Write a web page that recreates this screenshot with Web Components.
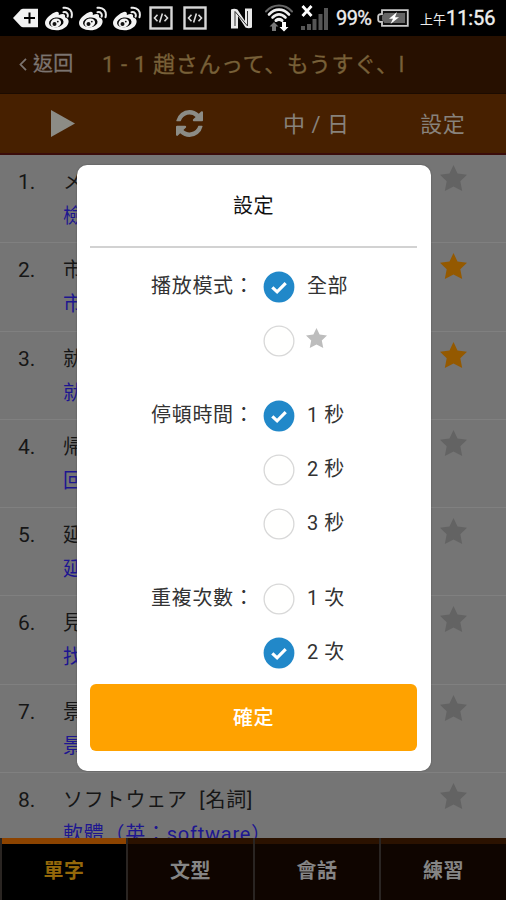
<!DOCTYPE html>
<html lang="zh-Hant"><head><meta charset="utf-8"><title>設定</title>
<style>
html,body{margin:0;height:900px;overflow:hidden;background:#757575;font-family:Roboto,"Noto Sans CJK TC",sans-serif}
</style></head><body>
<vocab-app></vocab-app>
<script>
const define = (name, html) => customElements.define(name, class extends HTMLElement {
  connectedCallback() {
    if (this.shadowRoot) return;
    const t = document.createElement('template');
    t.innerHTML = typeof html === 'function' ? html(this) : html;
    this.attachShadow({mode: 'open'}).append(t.content.cloneNode(true));
  }
});

define('star-icon', `<style>:host{display:block;width:27px;height:26px;color:#636363;white-space:normal}svg{display:block;width:100%;height:100%}</style>
<svg viewBox="0 0 27 26" preserveAspectRatio="none"><path fill="currentColor" d="M13.5 0 17.5 8.6 27 9.7 20.3 16.2 22.2 26 13.5 21.4 4.8 26 6.7 16.2 0 9.700 9.500 8.600Z"/></svg>`);

const weibo = `<svg style="margin-left:VARpx" width="28" height="25" viewBox="0 0 28 25">
<path fill="#f4f4f4" d="M9.500 6.500C12 5 14.500 5.500 13.800 9c4-1.700 7-1.300 6.200 2.200 3 .8 4.300 3.300 3.300 6C22 21.500 17 24.200 11.500 24.200 5 24.200 0 21.500 0 17 0 13 5 8.500 9.500 6.500Z"/>
<ellipse cx="11.300" cy="16.400" rx="7.300" ry="4.900" fill="#050505" transform="rotate(-8 11.3 16.6)"/>
<ellipse cx="10.800" cy="17" rx="5.400" ry="4.400" fill="#f4f4f4" transform="rotate(-20 10.8 17)"/>
<circle cx="9.500" cy="18" r="2" fill="#111"/><circle cx="12.800" cy="15.600" r=".9" fill="#111"/>
<path d="M18.500 6.200c3-.6 5 1.500 4.100 4.400M18.500 1.800c5.600-1 9.600 3.600 8 9.400" stroke="#eee" stroke-width="2" fill="none" stroke-linecap="round"/></svg>`;
const code = m => `<svg style="margin-left:${m}px" width="24" height="24" viewBox="0 0 24 24"><rect x="1.500" y="1.500" width="21" height="21" fill="#080808" stroke="#d8d8d8" stroke-width="2.400"/><path d="M8.500 8.800 5.500 12l3 3.200M15.500 8.800l3 3.200-3 3.200M13.400 7.500l-2.800 9" fill="none" stroke="#ddd" stroke-width="1.600"/></svg>`;

define('status-bar', `<style>:host{display:flex;align-items:center;height:36px;background:#000;color:#eee;font-size:20px;line-height:36px;white-space:nowrap}svg{flex:none;display:block}
.ap{font-size:13px;margin-left:11px;width:26px;padding-top:3px;box-sizing:border-box}.pc{margin-left:7px;width:38px;letter-spacing:-.6px;-webkit-text-stroke:.3px #eee}.tm{letter-spacing:-.1px;-webkit-text-stroke:.4px #eee}</style>
<svg style="margin-left:13px" width="25" height="20" viewBox="0 0 25 20"><path fill="#f2f2f2" d="M0 10 8 1.500Q8.800.800 10 .800H25V19.200H10Q8.800 19.200 8 18.500Z"/><path d="M16.500 4.500v11M11 10h11" stroke="#000" stroke-width="2"/></svg>
${weibo.replace('VAR','7')}${weibo.replace('VAR','6')}${weibo.replace('VAR','5.5')}${code(8.500)}${code(10)}
<svg style="margin-left:24px" width="21" height="21" viewBox="0 0 21 21"><path fill="#e8e8e8" d="M0 20.500V1.500C2 .500 4.500.500 6.500 1.500L14 13V.500H21V19.500C19 20.500 16.500 20.500 14.500 19.500L7 8V20.500Z"/><path d="M4 18V3.500L16.500 18V3" stroke="#333" stroke-width="1" fill="none"/></svg>
<svg style="margin-left:12px" width="30" height="28" viewBox="0 0 30 28"><g fill="none" stroke-linecap="round"><path d="M2 7.500C9-.500 21-.500 28 7.500" stroke="#666" stroke-width="2"/><path d="M5 10.500C11 4 19 4 25 10.500M8.500 13.500c4-4.200 9-4.200 13 0" stroke="#eee" stroke-width="2.600"/><path d="M12 16.500c2-1.500 4-1.500 6 0" stroke="#eee" stroke-width="3"/></g><path fill="#777" d="m10 18-4.500 4.500H8V27h4v-4.500h2.500Z"/><path fill="#fff" d="m20 27.500 4.500-4.500H22v-5h-4v5h-2.500Z"/></svg>
<svg style="margin-left:7px" width="28" height="26" viewBox="0 0 28 26"><path fill="#555" d="M0 21h4v4H0ZM6 19h4v6H6ZM11.500 14h4v11h-4ZM17.500 9h4v16h-4ZM23 3h4v22h-4Z"/><path d="m1.500 1 9 10M10.500 1l-9 10" stroke="#fff" stroke-width="2.800"/></svg>
<span class="pc">99%</span>
<svg style="margin-left:3px" width="32" height="18" viewBox="0 0 32 18"><path d="M5 1.200H30.800V16.800H5V13Q1.200 13 1.200 11V7Q1.200 5 5 5Z" fill="#111" stroke="#ccc" stroke-width="1.800"/><path fill="#666" d="M7.500 4H28v10H7.500L5 11V7Z"/><path fill="#fff" d="m20 3-8 6.800h4L13.500 15 22 8.200h-4Z"/></svg>
<span class="ap">上午</span><span class="tm">11:56</span>`);

define('title-bar', `<style>:host{display:flex;align-items:center;height:58px;box-sizing:border-box;background:#271000;color:#7c7470;font-size:20px;line-height:57px;white-space:nowrap;border-bottom:1px solid #1c0b00}
svg{margin-left:19px;width:8px;height:13px}.b{margin-left:6px;width:69px;letter-spacing:.3px;-webkit-text-stroke:.3px #7c7470}.t{width:304px;overflow:hidden;color:#786038;font-size:22px;letter-spacing:.65px;line-height:60px;font-family:Roboto,"Noto Sans CJK JP",sans-serif;-webkit-text-stroke:.3px #786038}</style>
<svg viewBox="0 0 8 13"><path d="M7 .800 1.500 6.500 7 12.200" fill="none" stroke="#7c7470" stroke-width="1.800"/></svg><span class="b">返回</span><span class="t" lang="ja">1 - 1 趙さんって、もうすぐ、l</span>`);

define('tool-bar', `<style>:host{display:grid;grid-template-columns:repeat(4,1fr);align-items:center;height:61px;box-sizing:border-box;background:#472000;border-bottom:2px solid #3a0c0a;color:#87827c;font-size:22px;text-align:center}
svg{display:block;margin:-3px auto 0;fill:#8c8c86}span{line-height:61px;letter-spacing:.5px}</style>
<svg width="24" height="27" viewBox="0 0 24 27"><path d="M0 0 24 13.500 0 27Z"/></svg>
<svg width="27" height="27" viewBox="0 0 1536 1536"><path d="M1511 928q0 5-1 7-64 268-268 434.500t-478 166.500q-146 0-282.500-55t-243.500-157l-129 129q-19 19-45 19t-45-19-19-45v-448q0-26 19-45t45-19h448q26 0 45 19t19 45-19 45l-137 137q71 66 161 102t187 36q134 0 250-65t186-179q11-17 53-117 8-23 30-23h192q13 0 22.500 9.500t9.500 22.500zm25-800v448q0 26-19 45t-45 19h-448q-26 0-45-19t-19-45 19-45l138-138q-148-137-349-137-134 0-250 65t-186 179q-11 17-53 117-8 23-30 23h-199q-13 0-22.500-9.500t-9.500-22.500v-7q65-268 270-434.500t480-166.500q146 0 284 55.500t245 156.500l130-129q19-19 45-19t45 19 19 45z"/></svg>
<span>中 / 日</span><span>設定</span>`);

define('word-row', el => `<style>:host{display:grid;grid-template-columns:45px 1fr 27px;height:88.300px;box-sizing:border-box;padding:10px 39px 0 18px;border-bottom:1.500px solid #808080;color:#161616;font-size:21px;white-space:nowrap}
.n{line-height:34px}.w{font-size:20px;line-height:35px;letter-spacing:.8px}.m{font-size:20px;line-height:32px;color:#1d1690;letter-spacing:.75px}</style>
<span class="n">${el.getAttribute('n')}.</span><div><div class="w">${el.getAttribute('word')}</div><div class="m"><slot></slot></div></div><star-icon style="${el.hasAttribute('fav')?'color:#945900':''}"></star-icon>`);

define('tab-item', `<style>:host{display:block;box-sizing:border-box;height:62px;padding-top:6px;background:linear-gradient(#2b1200 6px,#0f0500 6px);border-left:2px solid #2a2522;color:#858585;font-size:20px;font-weight:700;line-height:54px;text-align:center;letter-spacing:.5px}
:host([active]){background:linear-gradient(#8c4300 6px,#000 6px);color:#94680a}</style><slot></slot>`);

define('radio-option', el => `<style>:host{display:flex;align-items:center;height:53.650px;gap:12px;white-space:pre}svg{flex:none}.t{display:flex;margin-top:-2px;letter-spacing:.5px;line-height:30px}</style>
<svg width="32" height="32" viewBox="0 0 32 32">${el.hasAttribute('checked')?'<circle cx="16" cy="16" r="15.400" fill="#2188c9"/><path d="m9.300 16.300 4.800 4.500 8.600-8.600" fill="none" stroke="#fff" stroke-width="3.200"/>':'<circle cx="16" cy="16" r="14.900" fill="#fffffe" stroke="#d8d8d8" stroke-width="1.300"/>'}</svg><span class="t"><slot></slot></span>`);

define('option-group', el => `<style>:host{display:grid;grid-template-columns:112px 1fr}.l{line-height:52px;white-space:nowrap;letter-spacing:.7px}</style><span class="l">${el.getAttribute('label')}</span><div><slot></slot></div>`);

define('settings-dialog', `<style>:host{display:flex;flex-direction:column;position:absolute;left:77px;top:165px;width:354px;height:606px;box-sizing:border-box;padding:0 14px 0 13px;background:#fff;border-radius:10px;box-shadow:0 0 1.500px #444;color:#333;font-size:20px}
h2{margin:0;height:81px;line-height:82px;border-bottom:2px solid #d2d2d2;text-align:center;font-size:20px;font-weight:400;color:#111;letter-spacing:.5px;box-sizing:content-box}
.g{display:flex;flex-direction:column;gap:22px;padding:12.200px 0 0 61px;height:423.800px;box-sizing:content-box}
button{height:67px;flex:none;border:0;border-radius:6px;background:#ffa200;color:#fff;font:500 20px Roboto,"Noto Sans CJK TC",sans-serif;letter-spacing:.5px;padding:0 0 2px}
star-icon{width:21px;height:20px;margin:0 0 3px -1px;color:#bdbdbd}</style>
<h2>設定</h2><div class="g">
<option-group label="播放模式："><radio-option checked>全部</radio-option><radio-option><star-icon></star-icon></radio-option></option-group>
<option-group label="停頓時間："><radio-option checked>1 秒</radio-option><radio-option>2 秒</radio-option><radio-option>3 秒</radio-option></option-group>
<option-group label="重複次數："><radio-option>1 次</radio-option><radio-option checked>2 次</radio-option></option-group>
</div><button>確定</button>`);

define('vocab-app', `<style>:host{display:flex;flex-direction:column;position:relative;width:506px;height:900px;overflow:hidden;background:#757575}
main{flex:1;min-height:0;overflow:hidden}nav{display:grid;grid-template-columns:126px 127px 126px 1fr;flex:none}status-bar,title-bar,tool-bar{flex:none}</style>
<status-bar></status-bar><title-bar></title-bar><tool-bar></tool-bar>
<main>
<word-row n="1" word="メ">檢</word-row>
<word-row n="2" word="市" fav>市</word-row>
<word-row n="3" word="就" fav>就</word-row>
<word-row n="4" word="帰">回</word-row>
<word-row n="5" word="延">延</word-row>
<word-row n="6" word="見">找</word-row>
<word-row n="7" word="景">景</word-row>
<word-row n="8" word="ソフトウェア&nbsp; [名詞]">軟體（英：software）</word-row>
</main>
<nav><tab-item active>單字</tab-item><tab-item>文型</tab-item><tab-item>會話</tab-item><tab-item>練習</tab-item></nav>
<settings-dialog></settings-dialog>`);
</script></body></html>
